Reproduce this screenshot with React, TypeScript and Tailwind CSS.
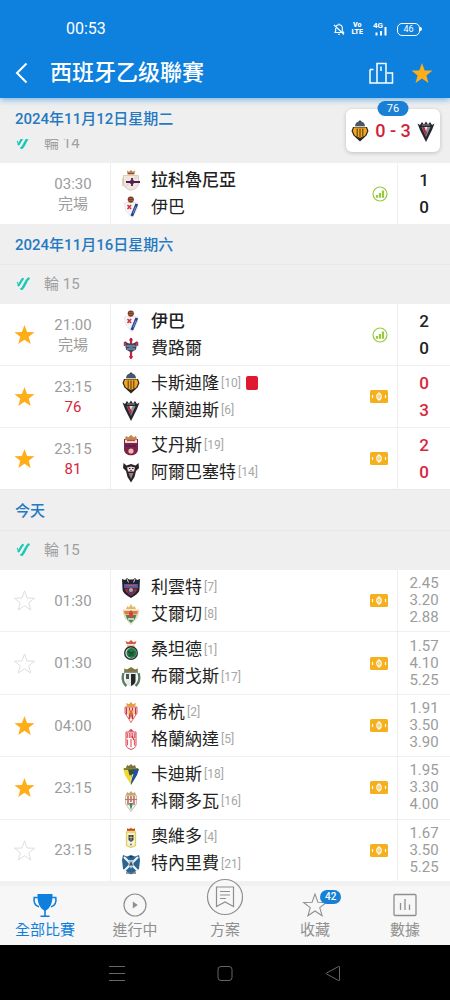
import React, { useState } from 'react';

interface Team {
  name: string;
  crest: string;
  rank?: number;
  winner?: boolean;
  redCard?: boolean;
}

interface Match {
  id: string;
  time: string;
  status?: string;
  live?: boolean;
  star?: 'on' | 'off';
  home: Team;
  away: Team;
  score?: [number, number];
  odds?: string[];
}

const ROUND_14: Match[] = [
  {
    id: 'm1',
    time: '03:30',
    status: '完場',
    home: { name: '拉科魯尼亞', crest: 'depor', winner: true },
    away: { name: '伊巴', crest: 'eibar' },
    score: [1, 0],
  },
];

const ROUND_15: Match[] = [
  {
    id: 'm2',
    time: '21:00',
    status: '完場',
    star: 'on',
    home: { name: '伊巴', crest: 'eibar', winner: true },
    away: { name: '費路爾', crest: 'ferrol' },
    score: [2, 0],
  },
  {
    id: 'm3',
    time: '23:15',
    status: '76',
    live: true,
    star: 'on',
    home: { name: '卡斯迪隆', crest: 'castellon', rank: 10, redCard: true },
    away: { name: '米蘭迪斯', crest: 'mirandes', rank: 6 },
    score: [0, 3],
  },
  {
    id: 'm4',
    time: '23:15',
    status: '81',
    live: true,
    star: 'on',
    home: { name: '艾丹斯', crest: 'eldense', rank: 19 },
    away: { name: '阿爾巴塞特', crest: 'albacete', rank: 14 },
    score: [2, 0],
  },
];

const TODAY: Match[] = [
  {
    id: 'm5',
    time: '01:30',
    star: 'off',
    home: { name: '利雲特', crest: 'levante', rank: 7 },
    away: { name: '艾爾切', crest: 'elche', rank: 8 },
    odds: ['2.45', '3.20', '2.88'],
  },
  {
    id: 'm6',
    time: '01:30',
    star: 'off',
    home: { name: '桑坦德', crest: 'racing', rank: 1 },
    away: { name: '布爾戈斯', crest: 'burgos', rank: 17 },
    odds: ['1.57', '4.10', '5.25'],
  },
  {
    id: 'm7',
    time: '04:00',
    star: 'on',
    home: { name: '希杭', crest: 'gijon', rank: 2 },
    away: { name: '格蘭納達', crest: 'granada', rank: 5 },
    odds: ['1.91', '3.50', '3.90'],
  },
  {
    id: 'm8',
    time: '23:15',
    star: 'on',
    home: { name: '卡迪斯', crest: 'cadiz', rank: 18 },
    away: { name: '科爾多瓦', crest: 'cordoba', rank: 16 },
    odds: ['1.95', '3.30', '4.00'],
  },
  {
    id: 'm9',
    time: '23:15',
    star: 'off',
    home: { name: '奧維多', crest: 'oviedo', rank: 4 },
    away: { name: '特內里費', crest: 'tenerife', rank: 21 },
    odds: ['1.67', '3.50', '5.25'],
  },
];

// 球隊徽章，統一畫在 20x22 的畫布上
const CRESTS: Record<string, React.ReactNode> = {
  depor: (
    <>
      <path d="M6 1.500l2 1.200L10 1l2 1.700 2-1.200-.6 4H6.600z" fill="#b98a4a" />
      <path d="M6.800 4.600h6.400" stroke="#a8344a" />
      <path d="M2.500 6.500h15V14c0 4-3 6-7.500 7.200C5.500 20 2.500 18 2.500 14z" fill="#efe9dc" stroke="#cfc5b2" strokeWidth=".8" />
      <path d="M4 18L16 7.500" stroke="#ddd3e6" strokeWidth="1.500" />
      <path d="M5 13h14M11 9v8" stroke="#4b1f57" strokeWidth="1.800" />
      <circle cx="11" cy="13" r="2.200" fill="#5a1f4f" />
      <path d="M2 9v8" stroke="#d9c9a4" strokeWidth="1.500" />
    </>
  ),
  eibar: (
    <>
      <path d="M3 7l7-1 7 1-1 7-5.500 7.500L5 15z" fill="#f5f5f7" stroke="#d8dbe2" strokeWidth=".6" />
      <circle cx="9.800" cy="3.600" r="3.100" fill="#7a3b22" />
      <path d="M8 2.500h4M7.500 4.500h4.500" stroke="#a8643b" strokeWidth=".8" />
      <path d="M6.500 9l3.600 4M10.100 9l-3.600 4" stroke="#d23a45" strokeWidth="1.700" />
      <path d="M15.800 8L10.800 20" stroke="#27408b" strokeWidth="2.800" />
      <path d="M15 10.500l-3 7" stroke="#8fa6d8" strokeWidth=".8" />
    </>
  ),
  ferrol: (
    <>
      <path d="M10 1v20" stroke="#c0253c" strokeWidth="2.200" />
      <path d="M8 3h4M10 18l-1.500 1.500L10 22l1.500-2.500z" stroke="#c0253c" fill="#c0253c" />
      <path d="M3.500 5l5 3M16.500 5l-5 3" stroke="#8d2237" strokeWidth="1.800" />
      <path d="M4 6.500h12l-1 6-5 3-5-3z" fill="#3c4760" />
      <path d="M5.500 9h9M6 12h8" stroke="#9fb2c6" strokeWidth="1.200" />
      <circle cx="10" cy="10.500" r="2" fill="#5d7794" />
      <path d="M3.500 5v4M16.500 5v4" stroke="#b9344a" strokeWidth="1.500" />
    </>
  ),
  castellon: (
    <>
      <path d="M5 7c0-4 2-5.500 5-5.500S15 3 15 7z" fill="#46566b" />
      <path d="M8.500 2L10 0l1.500 2z" fill="#30384a" />
      <path d="M3 7h14l1.500 4-2 4.500L10 21.500l-6.500-6-2-4.500z" fill="#2b2622" />
      <path d="M4 7.500h12l1.200 3.500-2 4.500-5.200 2.500-5.200-2.500-2-4.500z" fill="#f2a51e" />
      <path d="M7.200 8.500v8M10 8.500v9M12.800 8.500v8" stroke="#3a2a1a" strokeWidth=".9" />
      <path d="M5 6.500h10" stroke="#c3ccd6" strokeWidth="1" />
    </>
  ),
  mirandes: (
    <>
      <path d="M1.500 3.500L4 5l2-3 2 2.500 2-3 2 3L14 2l2 3 2.500-1.500L16 10l-6 12L4 10z" fill="#26262e" />
      <path d="M5.500 7h9L10 17z" fill="#8c8f9c" />
      <path d="M6 7l3.800 9 1-3L8.500 7z" fill="#b3273b" />
      <path d="M8.500 7l1.500 4 1.500-4z" fill="#e3e5ea" />
      <path d="M6 5h8" stroke="#8b8e98" strokeWidth="1" />
    </>
  ),
  eldense: (
    <>
      <path d="M4 5l1-3 2.500 1.200L10 .8l2.500 2.400L15 2l1 3z" fill="#c58a3a" />
      <path d="M3 5h14v10c0 4-3 6.300-7 6.300S3 19 3 15z" fill="#7b2348" />
      <path d="M4 5.500h12V9H4z" fill="#f0d9c6" />
      <path d="M6 6.500h8" stroke="#c04a4a" strokeWidth="1.200" />
      <circle cx="10" cy="17" r="2.600" fill="#f0b9b4" />
      <path d="M5 12h10" stroke="#5c1a54" strokeWidth="1.500" />
    </>
  ),
  albacete: (
    <>
      <path d="M2.500 2l3 2.500L10 3l4.500 1.500 3-2.500.5 5-3 3-1.500 6L10 21.500 6.500 16 5 10 2 7z" fill="#2b2329" />
      <path d="M6 6.500l4-1 4 1-1 4H7z" fill="#ecdde0" />
      <path d="M8 7.500h1.500M11 7.500h1.500" stroke="#2b2329" strokeWidth="1" />
      <path d="M7.500 12l2.500 6 2.500-6z" fill="#8f8087" />
      <path d="M9 9.500h2" stroke="#b0374a" strokeWidth="1" />
    </>
  ),
  levante: (
    <>
      <path d="M1 3l3 1 2-2 2 1.500h4L14 2l2 2 3-1-.5 10c0 4-4 6-8.500 9C5.500 19 1.500 17 1.500 13z" fill="#20222f" />
      <path d="M3 8h14v4H3z" fill="#4a5f9c" />
      <path d="M3.500 12.500h13L15 16l-5 4-5-4z" fill="#9b2c3c" />
      <path d="M5 9.500h10" stroke="#c94a59" strokeWidth="1.300" />
      <path d="M7.500 13v4M10 13v6M12.500 13v4" stroke="#2d3f7c" strokeWidth="1.200" />
      <circle cx="10" cy="14" r="2" fill="#b9a68f" />
      <path d="M6 3l1.500 3.500M14 3l-1.500 3.500" stroke="#d8d8dc" strokeWidth="1" />
    </>
  ),
  elche: (
    <>
      <path d="M5 6l1.500-3L8 4.500 10 1l2 3.500L13.500 3 15 6z" fill="#e8b55b" />
      <path d="M2 7l16 0-2 8-6 6.500L4 15z" fill="#f3ead9" stroke="#d8c79d" strokeWidth=".7" />
      <path d="M3 8h14l-.8 3.500H3.800z" fill="#e07c3d" />
      <path d="M4.500 12h11L14 16l-4 4-4-4z" fill="#3f8c5c" />
      <path d="M8 10l2-3 2 3v5H8z" fill="#c9483c" />
      <path d="M7 16h6" stroke="#f5efe0" strokeWidth="1.400" />
    </>
  ),
  racing: (
    <>
      <path d="M5.500 5l-1-3 3 1.200L10 1l2.500 2.200 3-1.200-1 3z" fill="#d65a3e" />
      <path d="M6 5.500h8V8H6z" fill="#e9c7b5" />
      <circle cx="10" cy="14" r="7" fill="#2b2f2c" />
      <circle cx="10" cy="14" r="5.600" fill="#d4dcd3" />
      <circle cx="10.500" cy="14" r="4.900" fill="#1d7a47" />
      <path d="M7 12.500c2 2 4 2 6 .5M7.500 16h5" stroke="#123f28" strokeWidth="1.200" fill="none" />
    </>
  ),
  burgos: (
    <>
      <path d="M3.500 5.500L3 2.500l3 1L10 1l4 2.500 3-1-.5 3z" fill="#8a7336" />
      <path d="M2.500 7c-1.500 5-.5 10 3 13M17.500 7c1.500 5 .5 10-3 13" stroke="#5c7c66" strokeWidth="2.400" fill="none" />
      <path d="M4.500 7h11v8c0 3-2.500 5-5.500 6-3-1-5.500-3-5.500-6z" fill="#e9ecea" />
      <path d="M10 8h4.500v7c0 2-2 4-4.500 5z" fill="#25282a" />
      <path d="M5 8h3v5H5z" fill="#4c5554" />
      <path d="M3 6h14" stroke="#4c6a50" strokeWidth="1.400" />
    </>
  ),
  gijon: (
    <>
      <path d="M6 5.500L5 2l3 1.200L10 1l2 2.200L15 2l-1 3.500z" fill="#e0a32f" />
      <path d="M4 6h12v6l-6 9.500L4 12z" fill="#fff" stroke="#d3433f" strokeWidth=".8" />
      <path d="M5.500 6.500v7M8.500 6.500v11.500M11.500 6.500v11.500M14.500 6.500v7" stroke="#d22f36" strokeWidth="1.500" />
      <path d="M7.500 10l2.500-1.500 2.500 1.500-1 3-1.500 3-1.500-3z" fill="#eab13a" />
      <path d="M10 9.500v7" stroke="#b9302c" strokeWidth="1" />
    </>
  ),
  granada: (
    <>
      <path d="M7 3.500L10 .8l3 2.700z" fill="#d8434f" />
      <path d="M5 4h10v13c0 2-2 3.500-5 4.500-3-1-5-2.500-5-4.500z" fill="#fff" stroke="#dc4652" strokeWidth="1" />
      <path d="M5.500 5h9v5h-9z" fill="#e56c76" />
      <path d="M7.500 5v5M10 5v5M12.500 5v5" stroke="#fff" strokeWidth=".7" />
      <path d="M6.500 11.500v6M10 11v8M13.500 11.500v6" stroke="#e2606b" strokeWidth="1.200" />
      <path d="M11 8l2 4" stroke="#d8303e" strokeWidth="1.400" />
    </>
  ),
  cadiz: (
    <>
      <path d="M5 5l1-3 2 1 2-2 2 2 2-1 1 3z" fill="#7d7434" />
      <path d="M2 5.500h16L16 12l-6 10L4 12z" fill="#f0d92f" />
      <path d="M11 6h7l-2 6-6 10z" fill="#1f4fa3" />
      <path d="M7 6.500l6 0-1.500 5-3 1z" fill="#42502f" />
      <path d="M3 6h14" stroke="#53603a" strokeWidth="1.500" />
      <path d="M12 11l-2.500 7" stroke="#f5ebaa" strokeWidth="1" />
    </>
  ),
  cordoba: (
    <>
      <path d="M5 5l1-3 2 1.200L10 1l2 2.200L14 2l1 3z" fill="#c9a56a" />
      <path d="M4.500 5.500h11V14L10 21.500 4.500 14z" fill="#f4f1ea" stroke="#b9b7a6" strokeWidth=".8" />
      <path d="M7 6v9M10 6v6M13 6v9" stroke="#c5564e" strokeWidth="1.400" />
      <path d="M8 13h4l-2 7z" fill="#3d8a68" />
      <path d="M4 9.500h12" stroke="#a98059" strokeWidth="1" />
    </>
  ),
  oviedo: (
    <>
      <path d="M6 5V2l2 1 2-1.500L12 3l2-1v3z" fill="#d9822e" />
      <path d="M6 3.800h8" stroke="#c2382f" strokeWidth="1.200" />
      <path d="M5.500 6h9v13.500L10 21.500l-4.500-2z" fill="#f4f0d4" stroke="#e2cf5d" strokeWidth="1.300" />
      <path d="M7.500 9h5v5L10 16l-2.500-2z" fill="#33425a" />
      <path d="M10 9.500v5M8.200 11.500h3.600" stroke="#e3c94c" strokeWidth=".8" />
      <circle cx="10" cy="18.500" r="1.100" fill="#6b88b5" />
    </>
  ),
  tenerife: (
    <>
      <path d="M2 2l4 1.500L10 2l4 1.500L18 2l1 5-1 9-8 5.500L2 16 1 7z" fill="#2e6490" />
      <path d="M3 4l14 14M17 4L3 18" stroke="#eef4f7" strokeWidth="2.200" />
      <path d="M7.500 7h5v6L10 15.500 7.500 13z" fill="#b9ccd8" />
      <path d="M8 12.500L10 8l2 4.500z" fill="#3c5a6e" />
      <path d="M5 20h10" stroke="#54718a" strokeWidth="1.400" />
      <path d="M8 3h4l-2 2.500z" fill="#183f63" />
    </>
  ),
};

const Crest: React.FC<{ name: string }> = ({ name }) => (
  <svg viewBox="0 0 20 22" className="h-[22px] w-5 shrink-0" aria-hidden="true">
    {CRESTS[name]}
  </svg>
);

const StarShape: React.FC<{ className: string }> = ({ className }) => (
  <svg viewBox="0 0 24 24" className={className} strokeLinejoin="miter" aria-hidden="true">
    <path d="M12 2l2.700 7.400 7.800.2-6.100 4.800 2.100 7.500L12 17.500l-6.500 4.400 2.100-7.500L1.500 9.600l7.800-.2z" />
  </svg>
);

const LeagueLogo: React.FC = () => (
  <svg viewBox="0 0 14 14" className="size-[14px]" fill="none" stroke="#19c9b7" strokeLinecap="round" aria-hidden="true">
    <path d="M6.800 1.800C5.200 3 4.600 6 2.600 8.400" strokeWidth="2.200" />
    <path d="M2.600 8.400L1.400 5.400" strokeWidth="1.200" />
    <path d="M12.600 1.500C10 3 9.300 8 6 11.800" strokeWidth="2.400" />
    <path d="M6 11.800H5" strokeWidth="1.800" />
  </svg>
);

const StatsIcon: React.FC = () => (
  <svg viewBox="0 0 16 16" className="size-4" fill="none" stroke="#97c93d" aria-hidden="true">
    <circle cx="8" cy="8" r="7" strokeWidth="1.200" />
    <path d="M5 11.800V9M8 11.800V7M11 11.800V4.500" strokeWidth="2.200" />
  </svg>
);

const PitchIcon: React.FC = () => (
  <svg viewBox="0 0 18 13" className="h-[13px] w-[18px]" fill="none" stroke="#fff" aria-hidden="true">
    <rect width="18" height="13" rx="1.500" fill="#f5b01e" stroke="none" />
    <ellipse cx="9" cy="6.500" rx="2.200" ry="3" strokeWidth="1.200" />
    <path d="M9 2v9" strokeWidth="1" />
    <path d="M2.500 5v3M15.500 5v3" strokeWidth="1.200" />
  </svg>
);

const StatusBar: React.FC = () => (
  <div className="flex items-center justify-between pt-[19px] pr-7 pl-[66px] text-base leading-5">
    <span>00:53</span>
    <div className="flex items-center">
      <svg viewBox="0 0 12 14" className="mr-[7px] h-[14px] w-3" fill="none" stroke="currentColor" aria-hidden="true">
        <path d="M2 10.500h8.500L9.300 8.800V6a3.300 3.300 0 0 0-6.600 0v2.800zM5 12.300h2M6 2.700V1.500M1 3l10 9.500" strokeWidth="1.100" />
      </svg>
      <span className="mr-[10px] text-center text-[7px] leading-[7px] font-black">
        Vo
        <br />
        LTE
      </span>
      <span className="mr-[10px] flex items-end">
        <span className="self-start text-[8px] leading-[7px] font-bold">4G</span>
        <svg viewBox="0 0 12 14" className="-ml-2 h-[14px] w-3" stroke="currentColor" strokeWidth="2" aria-hidden="true">
          <path d="M1.500 13.500v-3M6 13.500V9M10.500 13.500V5" />
        </svg>
      </span>
      <span className="flex items-center">
        <span className="w-[23px] rounded-[5px] border border-white text-center text-[9px] leading-[11px]">46</span>
        <span className="h-1 w-0.5 rounded-r bg-white" />
      </span>
    </div>
  </div>
);

const DateHeader: React.FC<{ title: string; pinned?: boolean }> = ({ title, pinned = false }) => (
  <h2
    className={`flex h-[41px] items-center bg-[#efefef] px-[15px] pt-0.5 text-[15px] font-medium text-[#2479c2] ${
      pinned ? 'relative z-10' : 'border-b border-[#e8e8e8]'
    }`}
  >
    {title}
  </h2>
);

const RoundHeader: React.FC<{ label: string; tucked?: boolean }> = ({ label, tucked = false }) => (
  <div
    className={`flex h-[38px] items-center gap-[14px] bg-[#efefef] px-4 text-[15px] text-[#a0a0a0] ${
      tucked ? '-mt-[15px]' : ''
    }`}
  >
    <LeagueLogo />
    <span>{label}</span>
  </div>
);

const TeamLine: React.FC<{ team: Team }> = ({ team }) => (
  <div className="flex items-center">
    <Crest name={team.crest} />
    <span className={`ml-[10px] text-[17px] leading-[27px] text-[#222] ${team.winner ? 'font-medium' : ''}`}>
      {team.name}
    </span>
    {team.rank && <span className="ml-0.5 text-xs text-[#a6a6a6]">[{team.rank}]</span>}
    {team.redCard && <span className="ml-[5px] h-[14px] w-3 rounded-xs bg-[#df1a30]" />}
  </div>
);

const MatchRow: React.FC<{ match: Match }> = ({ match }) => {
  const [starred, setStarred] = useState(match.star === 'on');

  return (
    <li className="flex min-h-[62px] flex-1 border-t border-[#efefef] bg-white">
      <div className="flex w-[111px] shrink-0 items-center border-r border-[#efefef]">
        <div className="w-12 shrink-0">
          {match.star && (
            <button
              type="button"
              aria-label="收藏"
              aria-pressed={starred}
              onClick={() => setStarred(!starred)}
              className="flex w-full justify-center"
            >
              <StarShape
                className={starred ? 'size-[23px] fill-[#ffae17]' : 'size-[23px] fill-none stroke-[#dcdcdc]'}
              />
            </button>
          )}
        </div>
        <div className="w-[50px] text-center text-[15px] leading-5 text-[#9c9c9c]">
          <div>{match.time}</div>
          {match.status && <div className={match.live ? 'text-[#d8263c]' : ''}>{match.status}</div>}
        </div>
      </div>

      <div className="flex flex-1 items-center justify-between pr-[9px] pl-[10px]">
        <div>
          <TeamLine team={match.home} />
          <TeamLine team={match.away} />
        </div>
        {match.status === '完場' ? <StatsIcon /> : <PitchIcon />}
      </div>

      <div className="flex w-[53px] shrink-0 flex-col justify-center border-l border-[#efefef] text-center">
        {match.score?.map((goals, i) => (
          <div
            key={i}
            className={`text-[17px] leading-[27px] font-medium ${match.live ? 'text-[#d8263c]' : 'text-[#222]'}`}
          >
            {goals}
          </div>
        ))}
        {match.odds?.map((odd, i) => (
          <div key={i} className="text-[15px] leading-[17px] text-[#9c9c9c]">
            {odd}
          </div>
        ))}
      </div>
    </li>
  );
};

const NAV_ITEMS = [
  {
    label: '全部比賽',
    active: true,
    icon: (
      <svg viewBox="0 0 26 26" className="size-[26px]" fill="none" stroke="currentColor" aria-hidden="true">
        <path d="M5.500 2h15c.3 7.500-1.500 14-7.500 17-6-3-7.800-9.500-7.500-17z" fill="currentColor" stroke="none" />
        <path d="M5.800 5.500H2.200C1.500 10 3 14 7 14.800M20.200 5.500h3.600c.7 4.500-.8 8.500-4.800 9.300" strokeWidth="1.600" />
        <path d="M13 18v6M8.500 24.200h9" strokeWidth="1.600" />
      </svg>
    ),
  },
  {
    label: '進行中',
    icon: (
      <svg viewBox="0 0 26 26" className="size-[26px]" fill="none" stroke="currentColor" aria-hidden="true">
        <circle cx="13" cy="13" r="11" strokeWidth="1.200" />
        <path d="M10.800 9.500v7l5-3.500z" fill="currentColor" stroke="none" />
      </svg>
    ),
  },
  {
    label: '方案',
    raised: true,
    icon: (
      <svg viewBox="0 0 38 38" className="size-[38px]" fill="none" stroke="currentColor" aria-hidden="true">
        <circle cx="19" cy="19" r="17.500" fill="#f7f7f7" strokeWidth="1.200" />
        <path d="M10.500 9h17v19.500L19 24l-8.500 4.500z" strokeWidth="1.200" />
        <path d="M14 13.500h10M14 17h10M14 20.500h6" strokeWidth="1.200" />
      </svg>
    ),
  },
  {
    label: '收藏',
    badge: 42,
    icon: <StarShape className="size-[26px] fill-none stroke-current" />,
  },
  {
    label: '數據',
    icon: (
      <svg viewBox="0 0 26 26" className="size-[26px]" fill="none" stroke="currentColor" aria-hidden="true">
        <rect x="2" y="2.500" width="22" height="21" rx="1" strokeWidth="1.300" />
        <path d="M8.500 18v-7M13 18V7M17.500 18v-5.500" strokeWidth="1.300" />
      </svg>
    ),
  },
];

const BottomNav: React.FC = () => (
  <nav className="z-10 grid h-16 grid-cols-5 border-t-[5px] border-[#f1f1f1] bg-[#f7f7f7]">
    {NAV_ITEMS.map((item) => (
      <a
        key={item.label}
        href="#"
        className={`flex flex-col items-center justify-end pb-[5px] ${item.active ? 'text-[#0e7fdc]' : 'text-[#8f8f8f]'}`}
      >
        <span className={`relative ${item.raised ? '-mt-6' : ''}`}>
          {item.icon}
          {item.badge && (
            <span className="absolute -top-[2px] left-[18px] rounded-full bg-[#1580d6] px-[5px] text-[10px] leading-[14px] font-medium text-white">
              {item.badge}
            </span>
          )}
        </span>
        <span className={`text-[15px] leading-5 ${item.raised ? 'mt-1' : 'mt-0.5'}`}>{item.label}</span>
      </a>
    ))}
  </nav>
);

const App: React.FC = () => {
  return (
    <div className="flex min-h-screen flex-col bg-[#efefef] font-[Roboto,'Noto_Sans_CJK_TC',sans-serif]">
      <header className="relative z-20 h-[98px] bg-[#0e80dd] text-white shadow-[0_2px_6px_rgba(14,128,221,0.5)]">
        <StatusBar />
        <div className="flex items-center pt-4 pr-4 pl-3">
          <button type="button" aria-label="返回" className="flex w-[38px]">
            <svg viewBox="0 0 20 24" className="h-6 w-5" fill="none" stroke="currentColor" strokeWidth="2" aria-hidden="true">
              <path d="M14.500 2.500L5 12l9.500 9.500" />
            </svg>
          </button>
          <h1 className="flex-1 text-[22px] leading-9 font-medium">西班牙乙级聯賽</h1>
          <button type="button" aria-label="積分榜">
            <svg viewBox="0 0 26 24" className="h-6 w-[26px]" fill="none" stroke="currentColor" strokeWidth="1.500" aria-hidden="true">
              <path d="M2 8.500h3.500M2 8.500V22h22.500V12H19M9 22V2.500h9V22M13 5.500v4.500" />
            </svg>
          </button>
          <button type="button" aria-label="收藏聯賽" className="ml-4">
            <StarShape className="size-6 fill-[#ffae17]" />
          </button>
        </div>

        {/* 進行中賽事的浮動比分卡 */}
        <a
          href="#"
          className="absolute top-[109px] right-[10px] flex h-[43px] w-[94px] items-center justify-between rounded-md bg-white px-1 shadow-[0_1px_4px_rgba(0,0,0,0.2)]"
        >
          <span className="absolute -top-2 left-1/2 w-[31px] -translate-x-1/2 rounded-full bg-[#1a80d6] text-center text-[11px] leading-[15px]">
            76
          </span>
          <Crest name="castellon" />
          <span className="text-lg font-medium text-[#cf1f3c]">0 - 3</span>
          <Crest name="mirandes" />
        </a>
      </header>

      <main className="flex flex-1 flex-col">
        <section>
          <DateHeader title="2024年11月12日星期二" pinned />
          <RoundHeader label="輪 14" tucked />
          <ul>
            {ROUND_14.map((match) => (
              <MatchRow key={match.id} match={match} />
            ))}
          </ul>
        </section>

        <section className="border-b border-[#e8e8e8]">
          <DateHeader title="2024年11月16日星期六" />
          <RoundHeader label="輪 15" />
          <ul>
            {ROUND_15.map((match) => (
              <MatchRow key={match.id} match={match} />
            ))}
          </ul>
        </section>

        <section className="flex flex-1 flex-col">
          <DateHeader title="今天" />
          <RoundHeader label="輪 15" />
          <ul className="flex flex-1 flex-col">
            {TODAY.map((match) => (
              <MatchRow key={match.id} match={match} />
            ))}
          </ul>
        </section>
      </main>

      <BottomNav />

      <div className="flex h-[55px] items-center justify-center gap-[84px] bg-black text-[#666]">
        <button type="button" aria-label="最近任務">
          <svg viewBox="0 0 24 24" className="size-6" stroke="currentColor" aria-hidden="true">
            <path d="M4 5.500h16M4 12.500h16M4 19.500h16" />
          </svg>
        </button>
        <button type="button" aria-label="主畫面">
          <svg viewBox="0 0 24 24" className="size-6" fill="none" stroke="currentColor" aria-hidden="true">
            <rect x="5" y="5.500" width="14" height="14" rx="3" />
          </svg>
        </button>
        <button type="button" aria-label="上一頁">
          <svg viewBox="0 0 24 24" className="size-6" fill="none" stroke="currentColor" aria-hidden="true">
            <path d="M18.500 6v13a.6.6 0 0 1-.9.500L5.500 13a.6.6 0 0 1 0-1L17.600 5.500a.6.6 0 0 1 .9.500z" />
          </svg>
        </button>
      </div>
    </div>
  );
};

export default App;
